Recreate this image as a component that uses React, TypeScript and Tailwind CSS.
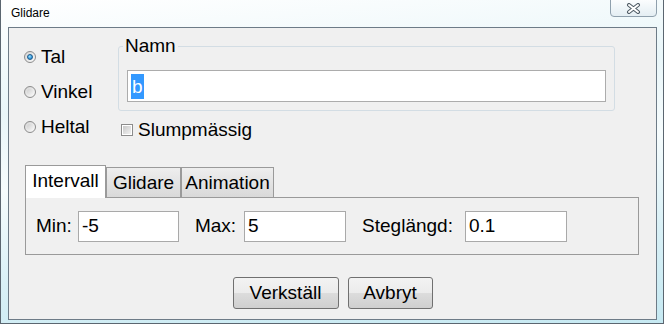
import React from "react";

const font = "font-['Liberation_Sans',Arial,sans-serif]";

function Radio({ checked }: { checked?: boolean }) {
  return (
    <span className="flex h-[12px] w-[12px] items-center justify-center rounded-full border border-[#8c8c8c] bg-[linear-gradient(135deg,#d4d4d4,#fbfbfb)]">
      {checked ? (
        <span className="h-[6px] w-[6px] rounded-full border border-[#1c5a8c] bg-[radial-gradient(circle_at_40%_35%,#9be3ff,#2b8fd6_70%)]" />
      ) : (
        <span className="h-[6px] w-[6px] rounded-full bg-[linear-gradient(135deg,#cfcfcf,#f4f4f4)]" />
      )}
    </span>
  );
}

function Field({ value, width }: { value: string; width: string }) {
  return (
    <div
      className={`flex h-[31px] items-center border border-[#a9a9a9] bg-white pl-[3px] text-[19px] text-black ${width}`}
    >
      {value}
    </div>
  );
}

export default function App() {
  return (
    <div className={`h-[325px] w-[667px] bg-white ${font}`}>
      <div className="flex h-[324px] w-[664px] flex-col border-x border-b border-[#5b6670] bg-[linear-gradient(175deg,#ffffff_0%,#e9f6f9_30%,#f6fcfd_50%,#d9f0f6_75%,#c6e9f2_100%)]">
        {/* title bar */}
        <div className="flex h-[27px] items-start">
          <span className="pl-[10px] pt-[6px] text-[12px] leading-[14px] text-black">
            Glidare
          </span>
          <div className="ml-auto mr-[6px] mt-[-1px] flex h-[18px] w-[47px] items-center justify-center rounded-b-[4px] border border-[#8fa0ad] bg-[linear-gradient(180deg,#fbfdfe,#e4eef3)]">
            <svg width="15" height="11" viewBox="0 0 15 11">
              <path d="M3 2 L12 9 M12 2 L3 9" stroke="#4d5a63" strokeWidth="4" strokeLinecap="round" />
              <path d="M3 2 L12 9 M12 2 L3 9" stroke="#ffffff" strokeWidth="2" strokeLinecap="round" />
            </svg>
          </div>
        </div>

        {/* client area */}
        <div className="pl-[7px]">
          <div className="flex h-[293px] w-[649px] flex-col border border-[#6d7b87] bg-[#f0f0f0] text-[19px] leading-[20px] text-black">
            <div className="flex pl-[15px]">
              <div className="flex w-[94px] flex-col pt-[11px]">
                {[
                  { label: "Tal", checked: true },
                  { label: "Vinkel", checked: false },
                  { label: "Heltal", checked: false },
                ].map((r) => (
                  <div key={r.label} className="flex h-[35px] items-center gap-[5px]">
                    <Radio checked={r.checked} />
                    <span>{r.label}</span>
                  </div>
                ))}
              </div>

              <div className="flex w-[497px] flex-col pt-[8px]">
                <fieldset className="rounded-[3px] border border-[#d3dde4] px-[8px] pb-[8px]">
                  <legend className="-ml-[4px] px-[2px] leading-[20px]">Namn</legend>
                  <div className="mt-[14px] flex h-[32px] items-center border border-[#acacac] bg-white pl-[3px]">
                    <span className="bg-[#3399ff] px-px leading-[25px] text-white">b</span>
                  </div>
                </fieldset>
                <div className="mt-[9px] flex items-center gap-[5px] pl-[3px]">
                  <span className="flex h-[12px] w-[12px] items-center justify-center border border-[#8c8c8c] bg-white">
                    <span className="h-[8px] w-[8px] bg-[linear-gradient(135deg,#c8c8c8,#f2f2f2)]" />
                  </span>
                  <span>Slumpmässig</span>
                </div>
              </div>
            </div>

            {/* tabs */}
            <div className="ml-[16px] mt-[21px] flex items-end">
              <div className="relative z-10 -mb-px flex h-[33px] w-[81px] items-center justify-center border-x border-t border-[#9a9a9a] bg-white pb-[2px]">
                Intervall
              </div>
              <div className="flex h-[30px] w-[75px] items-center justify-center border-x border-t border-[#9a9a9a] bg-[linear-gradient(180deg,#eeeeee,#d9d9d9)]">
                Glidare
              </div>
              <div className="flex h-[30px] w-[93px] items-center justify-center border-x border-t border-[#9a9a9a] bg-[linear-gradient(180deg,#eeeeee,#d9d9d9)]">
                Animation
              </div>
            </div>
            <div className="ml-[16px] flex h-[58px] w-[614px] items-center border border-[#9a9a9a] bg-[#f0f0f0] pl-[10px]">
              <span>Min:</span>
              <div className="ml-[6px]">
                <Field value="-5" width="w-[101px]" />
              </div>
              <span className="ml-[16px]">Max:</span>
              <div className="ml-[8px]">
                <Field value="5" width="w-[102px]" />
              </div>
              <span className="ml-[16px]">Steglängd:</span>
              <div className="ml-[12px]">
                <Field value="0.1" width="w-[102px]" />
              </div>
            </div>

            {/* buttons */}
            <div className="mt-[22px] flex justify-center gap-[9px]">
              <button className="h-[32px] w-[106px] rounded-[3px] border border-[#707070] bg-[linear-gradient(180deg,#f3f3f3_0%,#ebebeb_50%,#dcdcdc_51%,#cfcfcf_100%)] text-[19px]">
                Verkställ
              </button>
              <button className="h-[32px] w-[85px] rounded-[3px] border border-[#707070] bg-[linear-gradient(180deg,#f3f3f3_0%,#ebebeb_50%,#dcdcdc_51%,#cfcfcf_100%)] text-[19px]">
                Avbryt
              </button>
            </div>
          </div>
        </div>
      </div>
    </div>
  );
}
